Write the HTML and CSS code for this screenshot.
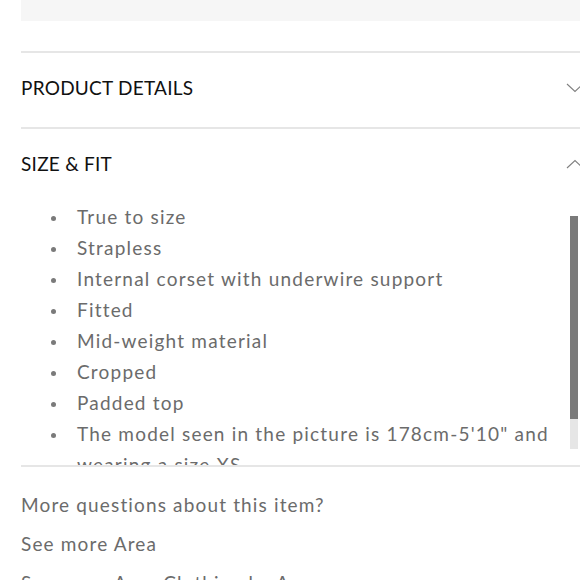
FILE: index.html
```html
<!DOCTYPE html>
<html lang="en">
<head>
<meta charset="utf-8">
<link rel="stylesheet" href="styles.css">
</head>
<body>
<div class="page">
  <div class="media-box"></div>
  <section class="accordion">
    <div class="acc-header">
      <h2 class="acc-title">PRODUCT DETAILS</h2>
      <svg class="chev" width="18" height="10" viewBox="0 0 18 10"><path d="M1 1 L9 8.5 L17 1" fill="none" stroke="#808080" stroke-width="1.1"/></svg>
    </div>
  </section>
  <section class="accordion open">
    <div class="acc-header">
      <h2 class="acc-title">SIZE &amp; FIT</h2>
      <svg class="chev" width="18" height="10" viewBox="0 0 18 10"><path d="M1 9 L9 1.5 L17 9" fill="none" stroke="#808080" stroke-width="1.1"/></svg>
    </div>
    <div class="acc-body">
      <ul class="fit-list">
        <li>True to size</li>
        <li>Strapless</li>
        <li>Internal corset with underwire support</li>
        <li>Fitted</li>
        <li>Mid-weight material</li>
        <li>Cropped</li>
        <li>Padded top</li>
        <li>The model seen in the picture is 178cm-5'10" and wearing a size XS</li>
      </ul>
      <div class="scrollbar"><div class="thumb"></div></div>
    </div>
  </section>
  <div class="more">
    <p>More questions about this item?</p>
    <p>See more Area</p>
    <p>See more Area Clothing by Area</p>
  </div>
</div>
</body>
</html>
```
FILE: styles.css
```css
html, body {
  margin: 0;
  padding: 0;
  background: #fff;
  overflow: hidden;
}
body {
  font-family: "Lato", "Noto Sans", sans-serif;
  width: 580px;
  height: 580px;
}
.page {
  padding-left: 21px;
}
.media-box {
  height: 21px;
  background: #f6f6f6;
}
.accordion {
  border-top: 2px solid #e6e6e6;
}
.accordion:first-of-type {
  margin-top: 30px;
}
.acc-header {
  height: 74px;
  padding-bottom: 5px;
  box-sizing: border-box;
  display: flex;
  align-items: center;
  justify-content: space-between;
  overflow: hidden;
}
.acc-title {
  margin: 0;
  font-size: 19px;
  font-weight: 400;
  letter-spacing: 0.25px;
  color: #111;
}
.chev {
  flex: none;
  margin-right: -4px;
  margin-top: 1px;
}
.acc-body {
  position: relative;
  height: 264px;
  margin-top: -2px;
  overflow: hidden;
}
.fit-list {
  margin: 0;
  padding: 0 0 0 30px;
  list-style: none;
  color: #6b6b6b;
  font-size: 19px;
  line-height: 31px;
  letter-spacing: 1.2px;
  width: 500px;
}
.fit-list li {
  display: flex;
}
.fit-list li::before {
  content: "";
  flex: none;
  width: 5px;
  height: 5px;
  border-radius: 50%;
  background: #7a7a7a;
  margin: 15px 21px 0 0;
}
.scrollbar {
  position: absolute;
  right: 2px;
  top: 15px;
  width: 8px;
  height: 233px;
  background: #e6e6e6;
}
.thumb {
  height: 203px;
  background: #7a7a7a;
}
.more {
  border-top: 2px solid #e6e6e6;
  padding-top: 18px;
  color: #6b6b6b;
  font-size: 19px;
  letter-spacing: 1.15px;
}
.more p {
  margin: 0;
  line-height: 39px;
}
```
